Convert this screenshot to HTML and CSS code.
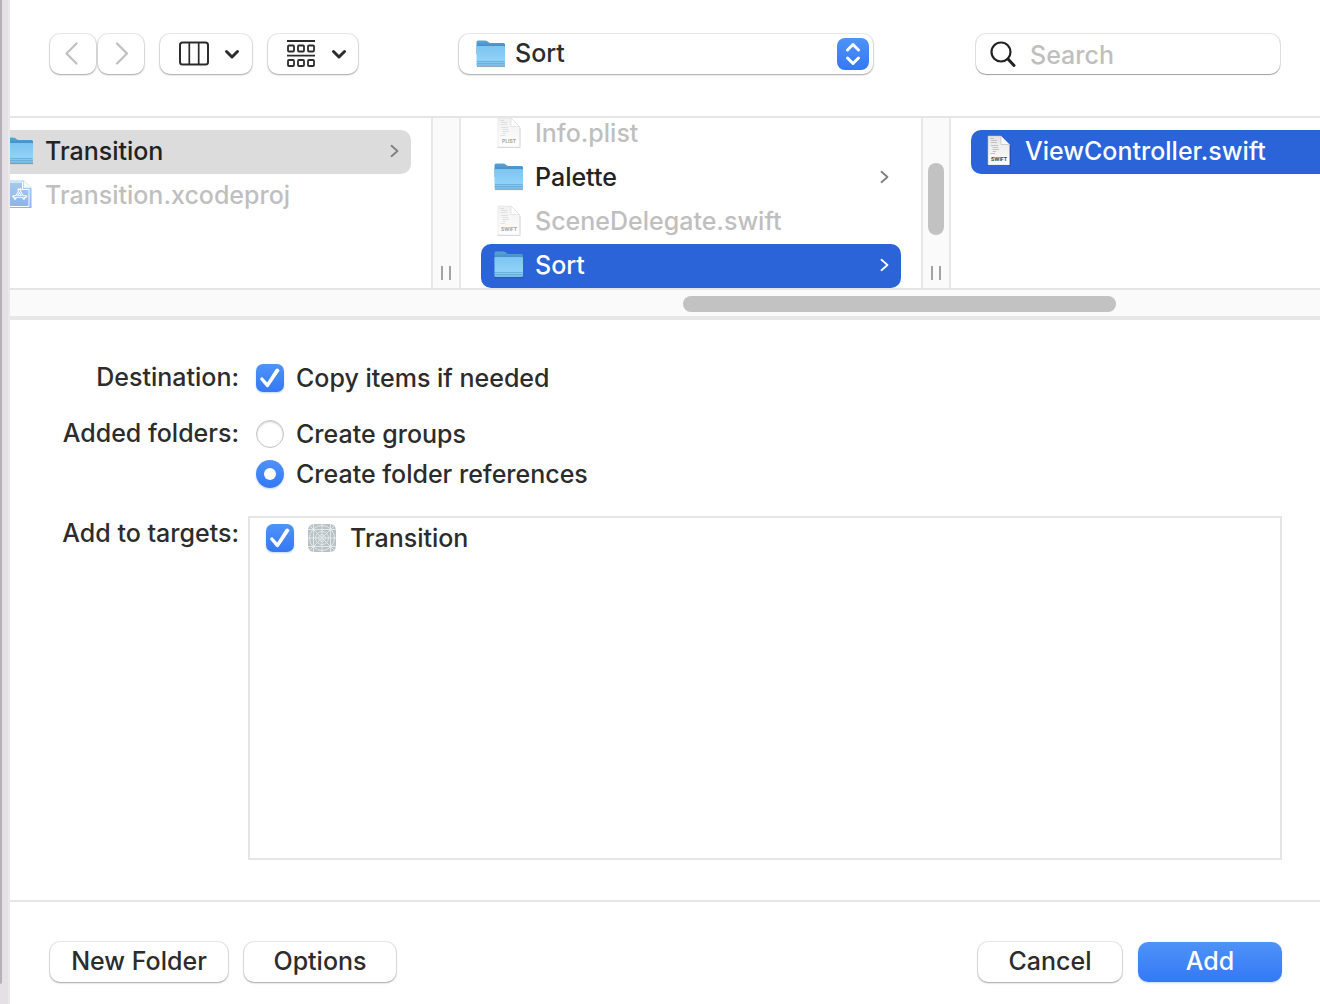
FILE: index.html
```html
<!DOCTYPE html>
<html lang="en">
<head>
<meta charset="utf-8">
<title>Add Files</title>
<link rel="stylesheet" href="styles.css">
</head>
<body>
<svg class="defs" aria-hidden="true">
  <defs>
    <linearGradient id="folder-back" x1="0" y1="0" x2="0" y2="1">
      <stop offset="0" stop-color="#5ba5d6"/><stop offset="0.5" stop-color="#3f8cc6"/>
    </linearGradient>
    <linearGradient id="folder-front" x1="0" y1="0" x2="0" y2="1">
      <stop offset="0" stop-color="#7cc4f2"/><stop offset="0.7" stop-color="#90d2f8"/><stop offset="1" stop-color="#6fb9e6"/>
    </linearGradient>
    <linearGradient id="paper" x1="0" y1="0" x2="0" y2="1">
      <stop offset="0" stop-color="#e4e4e4"/><stop offset="1" stop-color="#ffffff"/>
    </linearGradient>
    <linearGradient id="project" x1="0" y1="0" x2="0" y2="1">
      <stop offset="0" stop-color="#a3cdf1"/><stop offset="1" stop-color="#8fb0ee"/>
    </linearGradient>
    <symbol id="folder" viewBox="0 0 32 32">
      <path d="M2 28.300h28" stroke="#000" stroke-opacity=".35" stroke-width="1.600"/>
      <path d="M1.500 4Q1.500 2.500 3 2.500H10Q11.500 2.500 12.500 3.300L13.500 4.200Q14.300 5 15.500 5H28.500Q30 5 30 6.500V16H1.500Z" fill="url(#folder-back)"/>
      <path d="M1.500 9Q1.500 8 2.500 8H29Q30 8 30 9V26.800Q30 28.300 28.500 28.300H3Q1.500 28.300 1.500 26.800Z" fill="url(#folder-front)"/>
      <path d="M2 23.500H29.500M2 25.500H29.500" stroke="#5fa7d4" stroke-width=".7"/>
    </symbol>
    <symbol id="page" viewBox="0 0 32 32">
      <path d="M4.500 30.500H27.500M27 11V29.500" stroke="#000" stroke-opacity=".3" stroke-width="1.200"/>
      <path d="M5 1H18L26.500 9.500V30H5Z" fill="url(#paper)" stroke="#bdbdbd" stroke-width=".5"/>
      <path d="M18 1V9.500H26.500Z" fill="#fff" stroke="#bcbcbc" stroke-width=".7"/>
      <path d="M7 3.500H11M8 5.500H14M8 7.500H14M8 10.500H15M9.500 12.500H15M9.500 14.500H16M9.500 16.500H13M7.500 18.500H12" stroke="#b8b8b8" stroke-width=".8"/>
    </symbol>
    <symbol id="chevron" viewBox="0 0 12 16">
      <path d="M2.500 2.800L8.500 8L2.500 13.200" fill="none" stroke="currentColor" stroke-width="1.800" stroke-linecap="round" stroke-linejoin="round"/>
    </symbol>
    <symbol id="down" viewBox="0 0 16 12">
      <path d="M2.500 3.500L8 9L13.500 3.500" fill="none" stroke="currentColor" stroke-width="3" stroke-linecap="round" stroke-linejoin="round"/>
    </symbol>
  </defs>
</svg>
<div class="screen">
  <div class="edge"><div class="edge-window"></div></div>
  <main class="dialog">
    <header class="toolbar">
      <div class="tools">
        <div class="history">
          <button class="push nav" type="button" aria-label="Back" disabled>
            <svg width="18" height="24" viewBox="0 0 18 24"><path d="M12.500 2.500L2.500 12.500L12.500 22.500" fill="none" stroke="currentColor" stroke-width="2.200" stroke-linecap="round" stroke-linejoin="round"/></svg>
          </button>
          <button class="push nav" type="button" aria-label="Forward" disabled>
            <svg width="18" height="24" viewBox="0 0 18 24"><path d="M5 2.500L15 12.500L5 22.500" fill="none" stroke="currentColor" stroke-width="2.200" stroke-linecap="round" stroke-linejoin="round"/></svg>
          </button>
        </div>
        <button class="push view" type="button" aria-label="Column view">
          <svg width="32" height="28" viewBox="0 0 32 28"><rect x="2" y="2.500" width="28" height="22" rx="2.500" fill="none" stroke="currentColor" stroke-width="2"/><path d="M11.300 3V24M20.700 3V24" stroke="currentColor" stroke-width="1.700"/></svg>
          <svg width="16" height="12"><use href="#down"/></svg>
        </button>
        <button class="push view" type="button" aria-label="Group items">
          <svg width="32" height="28" viewBox="0 0 32 28"><g fill="none" stroke="currentColor" stroke-width="1.800"><path d="M2 1H30M2 15.700H30"/><rect x="3" y="5.500" width="6" height="6" rx="1"/><rect x="13" y="5.500" width="6" height="6" rx="1"/><rect x="23" y="5.500" width="6" height="6" rx="1"/><rect x="3" y="20" width="6" height="6" rx="1"/><rect x="13" y="20" width="6" height="6" rx="1"/><rect x="23" y="20" width="6" height="6" rx="1"/></g></svg>
          <svg width="16" height="12"><use href="#down"/></svg>
        </button>
      </div>
      <button class="push location" type="button" aria-haspopup="listbox">
        <svg width="32" height="32"><use href="#folder"/></svg>
        <span class="location-name">Sort</span>
        <span class="stepper"><svg width="32" height="32" viewBox="0 0 32 32"><path d="M10.500 12L16 6.500L21.500 12M10.500 20L16 25.500L21.500 20" fill="none" stroke="#fff" stroke-width="3" stroke-linecap="round" stroke-linejoin="round"/></svg></span>
      </button>
      <label class="search">
        <svg width="28" height="28" viewBox="0 0 28 28" aria-hidden="true"><circle cx="13" cy="12" r="9.500" fill="none" stroke="#222" stroke-width="2.200"/><path d="M20 19L26 25.500" stroke="#222" stroke-width="3" stroke-linecap="round"/></svg>
        <input type="search" placeholder="Search" aria-label="Search">
      </label>
    </header>

    <section class="browser" aria-label="Files">
      <div class="columns">
        <ul class="column">
          <li class="row open"><svg class="icon" width="32" height="32"><use href="#folder"/></svg><span class="name">Transition</span><svg class="more" width="12" height="16"><use href="#chevron"/></svg></li>
          <li class="row dim"><svg class="icon" width="32" height="32" viewBox="0 0 32 32"><path d="M5 1.500H20.500L28.500 9.500V29H5Z" fill="url(#project)"/><path d="M20.500 1V9H28.500Z" fill="#f4f7fb" stroke="#cbd4e0" stroke-width=".5"/><path d="M6 3H19.500V10.500H26V27.500H6" fill="none" stroke="#fff" stroke-width="1"/><g fill="none" stroke="#fff" stroke-linecap="round"><path d="M15.500 10.500L21 19.500M17.500 10.500L12 19.500" stroke-width="2.400"/><path d="M10.500 17.500H23" stroke-width="2.400"/></g><g fill="none" stroke="#8fb4ec" stroke-width=".7"><path d="M15.800 11L20.600 19M17.200 11L12.500 19M11 17.500H22.500"/></g></svg><span class="name">Transition.xcodeproj</span></li>
        </ul>
        <div class="gutter"><span class="grip"></span></div>
        <ul class="column scrolled">
          <li class="row dim"><svg class="icon faded" width="32" height="32" viewBox="0 0 32 32"><use href="#page"/><text class="kind" x="16" y="26" text-anchor="middle">PLIST</text></svg><span class="name">Info.plist</span></li>
          <li class="row"><svg class="icon" width="32" height="32"><use href="#folder"/></svg><span class="name">Palette</span><svg class="more" width="12" height="16"><use href="#chevron"/></svg></li>
          <li class="row dim"><svg class="icon faded" width="32" height="32" viewBox="0 0 32 32"><use href="#page"/><text class="kind" x="16" y="26" text-anchor="middle">SWIFT</text></svg><span class="name">SceneDelegate.swift</span></li>
          <li class="row selected"><svg class="icon" width="32" height="32"><use href="#folder"/></svg><span class="name">Sort</span><svg class="more" width="12" height="16"><use href="#chevron"/></svg></li>
        </ul>
        <div class="gutter"><span class="thumb"></span><span class="grip"></span></div>
        <ul class="column">
          <li class="row selected"><svg class="icon" width="32" height="32" viewBox="0 0 32 32"><use href="#page"/><text class="kind" x="16" y="26" text-anchor="middle">SWIFT</text></svg><span class="name">ViewController.swift</span></li>
        </ul>
      </div>
      <div class="scrollbar"><span class="thumb-wide"></span></div>
    </section>

    <form class="options" id="import">
      <span class="caption" id="destination">Destination:</span>
      <div class="field" role="group" aria-labelledby="destination">
        <label class="choice"><input type="checkbox" checked>Copy items if needed</label>
      </div>
      <span class="caption" id="folders">Added folders:</span>
      <div class="field" role="radiogroup" aria-labelledby="folders">
        <label class="choice"><input type="radio" name="folders">Create groups</label>
        <label class="choice"><input type="radio" name="folders" checked>Create folder references</label>
      </div>
      <span class="caption" id="targets">Add to targets:</span>
      <div class="targets" role="group" aria-labelledby="targets">
        <label class="choice target"><input type="checkbox" checked>
          <svg width="28" height="28" viewBox="0 0 28 28" aria-hidden="true"><rect width="28" height="28" rx="6" fill="#b9c1c5"/><g fill="none" stroke="#e3e8ea" stroke-width="1"><circle cx="14" cy="14" r="12.500"/><circle cx="14" cy="14" r="6.500"/><circle cx="14" cy="14" r="3.500"/><path d="M1.500 1.500L26.500 26.500M26.500 1.500L1.500 26.500M14 0V28M0 14H28M5.500 0V28M22.500 0V28M0 5.500H28M0 22.500H28"/></g></svg>
          Transition</label>
      </div>
    </form>

    <footer class="actions">
      <button class="push text new" type="button">New Folder</button>
      <button class="push text opts" type="button">Options</button>
      <button class="push text cancel" type="button">Cancel</button>
      <button class="push text primary" type="submit" form="import">Add</button>
    </footer>
  </main>
</div>
</body>
</html>
```
FILE: styles.css
```css
* { box-sizing: border-box; }
body {
  margin: 0;
  font-family: Inter, "Liberation Sans", sans-serif;
  font-size: 25px;
  font-weight: 500;
  line-height: 32px;
  color: #2c2c2c;
  background: #fff;
}
button, input { font: inherit; color: inherit; }
svg { flex: none; display: block; }
.defs { position: absolute; width: 0; height: 0; }
.screen { display: flex; min-height: 100vh; }

/* Window behind the dialog */
.edge {
  flex: none;
  width: 10px;
  padding-bottom: 20px;
  display: flex;
  background: #e4e0e3;
  border-right: 2px solid #e9e9e9;
}
.edge-window { width: 2px; background: #b3b1b6; border-bottom-right-radius: 2px; }

.dialog { flex: 1; min-width: 0; display: flex; flex-direction: column; overflow: hidden; }

/* Buttons */
.push {
  display: flex;
  align-items: center;
  justify-content: center;
  height: 40px;
  padding: 0;
  border: 0;
  border-radius: 10px;
  background: #fff;
  box-shadow: 0 0 0 1px rgba(0, 0, 0, .08), 0 1px 2px rgba(0, 0, 0, .3);
}

/* Toolbar */
.toolbar {
  display: flex;
  justify-content: space-between;
  align-items: flex-start;
  padding: 34px 40px 42px;
  border-bottom: 2px solid #e5e5e5;
}
.tools { display: flex; gap: 16px; }
.history { display: flex; gap: 2px; }
.nav { width: 46px; color: #bfbfbf; }
.nav svg { margin-bottom: 2px; }
.view { width: 92px; gap: 14px; padding-left: 6px; }
.view + .view { width: 90px; }
.location { width: 414px; padding: 0 4px 0 16px; gap: 8px; margin-right: 2px; }
.location-name { flex: 1; text-align: left; padding-bottom: 2px; }
.stepper { border-radius: 8px; background: linear-gradient(#4e93f8, #3478f6); }
.search {
  display: flex;
  align-items: center;
  gap: 14px;
  width: 304px;
  height: 40px;
  padding: 0 12px;
  border-radius: 10px;
  box-shadow: 0 0 0 1px rgba(0, 0, 0, .1), 0 1px 1px rgba(0, 0, 0, .3);
}
.search input { flex: 1; min-width: 0; padding: 2px 0 0; border: 0; outline: 0; background: none; }
.search input::placeholder { color: #bfbfbf; opacity: 1; }

/* Column browser, scrolled sideways past the start of its first column */
.columns { display: flex; height: 170px; margin-left: -39px; }
.column {
  flex: none;
  width: 460px;
  margin: 0;
  padding: 12px 20px 0;
  list-style: none;
  overflow: hidden;
}
.scrolled { display: flex; flex-direction: column; justify-content: flex-end; padding-top: 0; }
.row {
  flex: none;
  display: flex;
  align-items: center;
  gap: 10px;
  height: 44px;
  padding: 0 10px 2px 12px;
  border-radius: 10px;
  color: #222;
}
.name { flex: 1; white-space: nowrap; }
.more { color: #7f7f7f; }
.row.open { background: #dcdcdc; }
.row.dim { color: #bfbfbf; }
.row.selected { color: #fff; background: #2b63d9; }
.row.selected .more { color: #fff; }
.faded { opacity: .5; }
.kind { font-size: 5px; font-weight: 700; fill: #444; }
.gutter {
  flex: none;
  width: 30px;
  display: flex;
  flex-direction: column;
  justify-content: flex-end;
  align-items: center;
  gap: 31px;
  padding-bottom: 8px;
  border: solid #e8e8e8;
  border-width: 0 2px;
  background: #fafafa;
}
.thumb { width: 16px; height: 72px; border-radius: 8px; background: #c2c2c2; }
.grip { width: 10px; height: 14px; border: solid #a3a3a3; border-width: 0 2px; }
.scrollbar {
  height: 32px;
  padding: 6px 204px 0 673px;
  border-top: 2px solid #e5e5e5;
  border-bottom: 4px solid #e7e7e7;
  background: #fafafa;
}
.thumb-wide { display: block; height: 16px; border-radius: 8px; background: #c2c2c2; }

/* Import options */
.options {
  flex: 1;
  display: grid;
  grid-template-columns: 229px 1fr;
  grid-template-rows: auto auto 1fr;
  padding: 38px 38px 40px 0;
}
.caption { text-align: right; padding-top: 3px; }
.field { display: flex; flex-direction: column; padding: 0 0 16px 17px; }
.choice { display: flex; align-items: center; gap: 12px; height: 40px; }
.choice input {
  appearance: none;
  display: grid;
  place-items: center;
  flex: none;
  width: 28px;
  height: 28px;
  margin: 0;
  border-radius: 7px;
}
.choice input::before { content: ""; }
.choice input[type="radio"] { border-radius: 50%; border: 1px solid #c4c4c4; box-shadow: inset 0 1px 2px rgba(0, 0, 0, .2); }
.choice input:checked,
.choice input[type="radio"]:checked { border: 0; background: linear-gradient(#4e93f8, #3478f6); box-shadow: 0 1px 2px rgba(52, 120, 246, .3); }
.choice input[type="radio"]:checked::before { width: 12px; height: 12px; border-radius: 50%; background: #fff; }
.choice input[type="checkbox"]:checked::before {
  width: 20px;
  height: 20px;
  background: #fff;
  clip-path: polygon(0 56%, 4% 48%, 12% 46%, 36% 72%, 80% 4%, 90% 2%, 98% 12%, 44% 92%, 38% 97%, 30% 92%);
}
#targets { padding-top: 7px; }
.targets { border: 2px solid #e5e5e5; margin: 6px 0 0 9px; padding-left: 16px; }
.target { gap: 14px; }

/* Actions */
.actions { display: flex; gap: 16px; padding: 40px 38px 22px 40px; border-top: 2px solid #e5e5e5; }
.text { padding-bottom: 2px; }
.new { width: 178px; }
.opts { width: 152px; }
.cancel { width: 144px; margin-left: auto; }
.primary { width: 144px; color: #fff; background: linear-gradient(#4e93f8, #3478f6); box-shadow: 0 1px 2px rgba(52, 120, 246, .3); }
```
